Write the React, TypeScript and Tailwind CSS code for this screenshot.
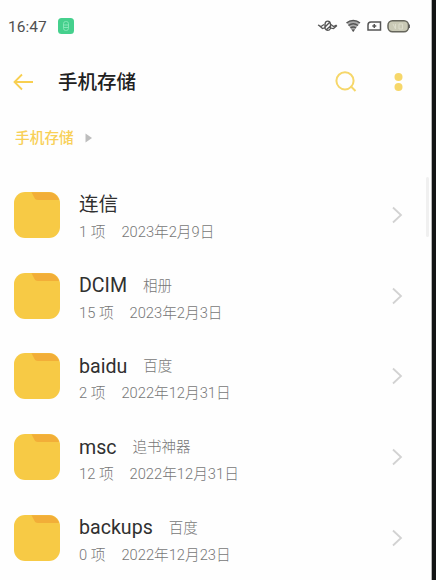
type Folder = {
  name: string;
  tag?: string;
  count: number;
  date: string;
};

const folders: Folder[] = [
  { name: "连信", count: 1, date: "2023年2月9日" },
  { name: "DCIM", tag: "相册", count: 15, date: "2023年2月3日" },
  { name: "baidu", tag: "百度", count: 2, date: "2022年12月31日" },
  { name: "msc", tag: "追书神器", count: 12, date: "2022年12月31日" },
  { name: "backups", tag: "百度", count: 0, date: "2022年12月23日" },
];

function FolderIcon() {
  return (
    <svg className="shrink-0" width="46" height="46" viewBox="0 0 46 46" aria-hidden="true">
      <rect width="46" height="46" rx="11" fill="#f7ca45" />
      <path d="M17.500 0.300H35c4.800 0 8.600 3.200 10 7.700H24c-1.800 0-2.900-.8-3.600-2.200z" fill="#f2ae38" />
    </svg>
  );
}

function StatusBar() {
  return (
    <div className="flex h-[52px] items-center justify-between pr-[21px] pl-2 text-[#505050]">
      <div className="flex items-center gap-[11px]">
        <span className="pt-0.5 text-[15.500px] leading-5">16:47</span>
        <svg width="16" height="16" viewBox="0 0 16 16" aria-hidden="true">
          <rect width="16" height="16" rx="3.500" fill="#45d08d" />
          <rect x="5.500" y="3.500" width="5" height="9" rx="2.200" fill="none" stroke="#86e6b7" />
          <path d="M6 7h4M6 9.500h4" stroke="#86e6b7" />
        </svg>
      </div>
      <svg width="94" height="16" viewBox="0 0 94 16" fill="none" stroke="#555" aria-hidden="true">
        <g transform="translate(1 0)">
          <path d="M1 7l3 1.500 3-2M1.500 7l4 3.500 3-1M14 6.500l2.500 2 3-1.500M13 10l3.500.5 3.500-3" strokeWidth="1.200" />
          <path d="M8 10.500V6a2.800 3.500 0 0 1 5.500 0v4.500c-1.500 2.500-4 2.500-5.500 0zM7.500 9.500l5-5M9 12l4.500-4" strokeWidth="1.400" />
        </g>
        <path d="M30.500 4.500c4-3 9.500-3 13.500 0L37.200 14z" fill="#aaa" stroke="none" />
        <path d="M30.500 5c4-3.200 9.500-3.200 13.500 0M32.500 7.500c3-2.200 6.500-2.200 9.500 0M34.500 10c1.800-1.300 3.700-1.300 5.500 0" strokeWidth="1.500" />
        <path d="M35.500 11.500h3.500l-1.800 2.500z" fill="#555" stroke="none" />
        <path d="M52 12V7c0-2 1-3 3-3h9.500v8z" strokeWidth="1.500" />
        <path d="M58.300 6v4M56.300 8h4" strokeWidth="1.500" />
        <rect x="72" y="2.700" width="20.500" height="11" rx="4.500" fill="#c9c9b5" stroke="#65655b" strokeWidth="1.500" />
        <path d="M93.200 6.500v3.500" strokeWidth="1.300" />
        <path d="M77 6l2.500 5V6M83 6h3.500v5H83z" stroke="#dcdccb" />
      </svg>
    </div>
  );
}

function Header() {
  return (
    <header className="flex h-[60px] items-center pr-[28px] pl-[13px]">
      <svg width="21" height="18" viewBox="0 0 21 18" fill="none" stroke="#f8cf50" strokeWidth="1.800" aria-hidden="true">
        <path d="M20 9H1.500M9 1.500L1.500 9 9 16.500" />
      </svg>
      <h1 className="ml-6 flex-1 pt-0.5 text-[19.500px] leading-7 font-medium text-[#202020]">手机存储</h1>
      <svg width="22" height="22" viewBox="0 0 22 22" fill="none" stroke="#f6d76a" strokeWidth="2" aria-hidden="true">
        <circle cx="10" cy="9.800" r="8.600" />
        <path d="M15.500 15l5 5" />
      </svg>
      <svg className="ml-[37px]" width="9" height="20" viewBox="0 0 9 20" fill="#f6d76a" aria-hidden="true">
        <circle cx="4.500" cy="4.900" r="4" />
        <circle cx="4.500" cy="15" r="4" />
      </svg>
    </header>
  );
}

function FolderRow({ name, tag, count, date }: Folder) {
  return (
    <li className="flex h-[80.750px] items-center pr-[28px] pl-[14px]">
      <FolderIcon />
      <div className="ml-[19px] flex-1 pt-[7px] whitespace-nowrap">
        <div className="flex h-[27px] items-center">
          <span className="text-[19.600px] leading-7 text-[#303030]">{name}</span>
          {tag && <span className="ml-4 pt-px text-[14.500px] leading-7 font-light text-[#777]">{tag}</span>}
        </div>
        <div className="flex h-[26px] items-center gap-4 text-[14.700px] font-light text-[#777]">
          <span>{count} 项</span>
          <span>{date}</span>
        </div>
      </div>
      <svg width="12" height="18" viewBox="0 0 12 18" fill="none" stroke="#d2d2d2" strokeWidth="1.800" aria-hidden="true">
        <path d="M2 1.500L10 9l-8 7.500" />
      </svg>
    </li>
  );
}

export default function App() {
  return (
    <div className="flex h-[580px] w-[436px] overflow-hidden bg-[#131415] font-[Roboto,'Noto_Sans_CJK_SC',sans-serif]">
      <main className="relative w-[432px] shrink-0 border-r border-[#b5b5b5] bg-[#fefefe]">
        <StatusBar />
        <Header />
        <nav className="flex h-[62.500px] items-center gap-[11px] pb-[10px] pl-[15px]">
          <span className="text-[14.700px] font-medium text-[#f8d057]">手机存储</span>
          <svg width="8" height="10" viewBox="0 0 8 10" fill="#bdbdbd" aria-hidden="true">
            <path d="M0.500 0.500L7 5 0.500 9.500z" />
          </svg>
        </nav>
        <ul>
          {folders.map((folder) => (
            <FolderRow key={folder.name} {...folder} />
          ))}
        </ul>
        <div className="absolute top-[177px] right-[2px] h-[60px] w-[3px] rounded-full bg-[#f0f0f0]" />
      </main>
    </div>
  );
}
